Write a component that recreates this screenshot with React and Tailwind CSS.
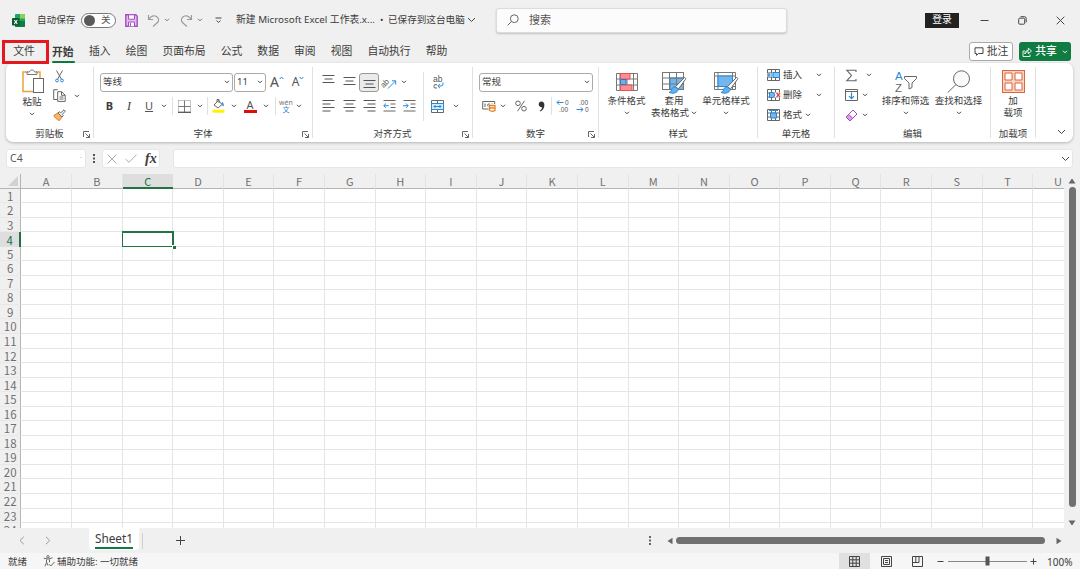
import clsx from "clsx";

const tabs = ["插入", "绘图", "页面布局", "公式", "数据", "审阅", "视图", "自动执行", "帮助"];
const columns = "ABCDEFGHIJKLMNOPQRSTU".split("");
const rows = Array.from({ length: 24 }, (_, i) => i + 1);

function Svg({ w, h, children, className, stroke = "#666", sw = 1 }) {
  return (
    <svg
      width={w}
      height={h}
      viewBox={`0 0 ${w} ${h}`}
      fill="none"
      stroke={stroke}
      strokeWidth={sw}
      className={clsx("shrink-0 overflow-visible font-['Liberation_Sans',sans-serif]", className)}
    >
      {children}
    </svg>
  );
}

function Slot({ className, children }) {
  return <div className={clsx("flex shrink-0 items-center justify-center", className)}>{children}</div>;
}

function Chevron({ className }) {
  return (
    <Svg w={6} h={4} className={className} stroke="#444">
      <path d="M1 .8 3 2.8 5 .8" />
    </Svg>
  );
}

function BigChevron({ className, color = "#444" }) {
  return (
    <Svg w={9} h={6} className={className} stroke={color}>
      <path d="M1 1 4.5 4.5 8 1" />
    </Svg>
  );
}

function Launcher() {
  return (
    <Svg w={7} h={7} stroke="#555" sw={0.9}>
      <path d="M.5 6V.5H6M2.5 2.5l4 4M6.5 3v3.5H3" />
    </Svg>
  );
}

function Divider({ className }) {
  return <div className={clsx("w-px shrink-0 bg-[#e1e1e1]", className)} />;
}

function Group({ label, launcher, className, children }) {
  return (
    <div className={clsx("flex h-[79px] shrink-0 flex-col pt-[1px]", className)}>
      <div className="flex h-[62px] shrink-0">{children}</div>
      <div className="flex h-[16px] shrink-0 items-center">
        <div className="w-[10px]" />
        <div className="flex-1 text-center">{label}</div>
        <div className="w-[10px] pt-[1px]">{launcher && <Launcher />}</div>
      </div>
    </div>
  );
}

function Lines({ widths, align = "center" }) {
  return (
    <Svg w={13} h={widths.length * 3.5 - 1.5} stroke="#555">
      {widths.map((w, i) => {
        const x = align === "left" ? 0.5 : align === "right" ? 12.5 - w : (13 - w) / 2;
        return <path key={i} d={`M${x} ${i * 3.5 + 0.5}h${w}`} />;
      })}
    </Svg>
  );
}

function Indent({ flip }) {
  return (
    <Svg w={13} h={12}>
      <path d="M.5 .5h12M7.5 4h5M7.5 7.500h5M.5 11h12" />
      <path stroke="#2b88d8" d={flip ? "M0 5.700h5M3 3.500l2.200 2.200L3 7.900" : "M.8 5.700h5M3 3.500.8 5.700 3 7.900"} />
    </Svg>
  );
}

function TitleBar() {
  return (
    <div className="flex h-[40px] shrink-0 items-center">
      <Slot className="ml-[11px] w-[14px]">
        <Svg w={13} h={13} stroke="none">
          <rect x="3" y="0" width="10" height="13" rx="1" fill="#21a366" />
          <path fill="#8fd14f" d="M8 0h4a1 1 0 0 1 1 1v3.500H8z" />
          <path fill="#107c41" d="M3 7h10v5a1 1 0 0 1-1 1H4a1 1 0 0 1-1-1z" />
          <rect x="0" y="4" width="7.500" height="7.500" rx=".7" fill="#0b5c2f" />
          <path stroke="#fff" strokeWidth="1.100" d="m2.300 6 3 3.800m0-3.800-3 3.800" />
        </Svg>
      </Slot>
      <span className="ml-[12px] w-[44px] whitespace-nowrap text-[9.6px]">自动保存</span>
      <div className="flex h-[15px] w-[35px] items-center rounded-full border border-[#777] bg-white pl-[2px]">
        <div className="h-[11px] w-[11px] rounded-full bg-[#5a5a5a]" />
        <span className="ml-[6px] text-[9.5px] text-[#555]">关</span>
      </div>
      <Slot className="ml-[7px] w-[16px]">
        <Svg w={13} h={13} stroke="#a34fc0" sw={1.4}>
          <path fill="#e3bdf0" d="M.8.8h10l1.400 1.400v10H.8z" />
          <path fill="#fff" strokeWidth="1" d="M3.500.8h6v4.400h-6zM3.500 12.200V8h6v4.200M5.500 9v3" />
        </Svg>
      </Slot>
      <Slot className="ml-[5px] w-[18px]">
        <Svg w={13} h={13} stroke="#999" sw={1.1}>
          <path d="M1.500 1v4.500h4.600M1.500 5.500C4 2 7 1 9.500 2.500s3 4.500.5 6.500L6 12.500" />
        </Svg>
      </Slot>
      <Chevron className="ml-[2px] opacity-70" />
      <Slot className="ml-[7px] w-[18px]">
        <Svg w={13} h={13} stroke="#999" sw={1.1}>
          <path d="M11.500 1v4.500H6.900M11.500 5.500C9 2 6 1 3.500 2.500s-3 4.500-.5 6.500L7 12.500" />
        </Svg>
      </Slot>
      <Chevron className="ml-[2px] opacity-70" />
      <Slot className="ml-[9px] w-[12px]">
        <Svg w={7} h={7} stroke="#444">
          <path d="M.5 1h6M1.500 3.500l2 2 2-2" />
        </Svg>
      </Slot>
      <span className="ml-[12px] w-[144px] whitespace-nowrap text-[9.8px]">新建 Microsoft Excel 工作表.x...</span>
      <span className="w-[8px] text-[9px]">•</span>
      <span className="w-[79px] whitespace-nowrap text-[9.6px]">已保存到这台电脑</span>
      <BigChevron />
      <div className="ml-[20px] flex h-[25px] w-[291px] items-center rounded-[3px] border border-[#dcdcdc] bg-[#fcfcfc] pl-[10px] shadow-[0_1px_2px_rgba(0,0,0,0.2)]">
        <Svg w={12} h={12} stroke="#666">
          <circle cx="7.300" cy="4.700" r="3.900" />
          <path d="M4.500 7.500.7 11.300" />
        </Svg>
        <span className="ml-[10px] text-[11px] text-[#555]">搜索</span>
      </div>
      <div className="ml-[138px] flex h-[15px] w-[34px] items-center justify-center bg-[#222] text-[9.8px] text-white">登录</div>
      <Slot className="ml-[15px] w-[20px]">
        <Svg w={9} h={9} stroke="#444"><path d="M.5 4.500h8" /></Svg>
      </Slot>
      <Slot className="ml-[18px] w-[20px]">
        <Svg w={9} h={9} stroke="#444">
          <rect x=".7" y="2.200" width="6" height="6" rx="1" />
          <path d="M2.500.7h4a1.700 1.700 0 0 1 1.700 1.700v4" />
        </Svg>
      </Slot>
      <Slot className="ml-[18px] w-[20px]">
        <Svg w={9} h={9} stroke="#444"><path d="m.7.7 7.600 7.600m0-7.600L.7 8.300" /></Svg>
      </Slot>
    </div>
  );
}

function TabBar() {
  return (
    <div className="flex h-[23px] shrink-0 items-center text-[10.8px]">
      <div className="relative flex h-[22px] w-[48px] items-center justify-center">
        文件
        <div className="absolute -top-[1px] left-[2px] h-[24px] w-[47px] border-[3px] border-[#e3191f]" />
      </div>
      <div className="ml-[4px] flex h-[22px] w-[23px] flex-col justify-between whitespace-nowrap pt-[3px] font-bold">
        <span className="leading-[16px]">开始</span>
        <div className="h-[2px] w-full rounded bg-[#107c41]" />
      </div>
      <div className="ml-[14px] flex gap-[15.1px]">
        {tabs.map((tab) => (
          <span key={tab}>{tab}</span>
        ))}
      </div>
      <div className="ml-auto flex h-[19px] w-[44px] items-center justify-center gap-[3px] rounded-[3px] border border-[#aaa] bg-white">
        <Svg w={10} h={9} stroke="#444">
          <path d="M1 .8h8v5.700H4.500L2.500 8.300V6.500H1z" />
        </Svg>
        批注
      </div>
      <div className="ml-[6px] mr-[9px] flex h-[19px] w-[52px] items-center justify-center gap-[3px] rounded-[3px] bg-[#107c41] font-medium text-white">
        <Svg w={10} h={10} stroke="#fff" sw={0.9}>
          <path d="M3 4H1v5.500h7V7.500M2.800 7C3 4.500 4.500 3.400 6.300 3.400V1.200L9.500 4 6.300 6.700V4.800C4.800 4.800 3.600 5.400 2.800 7z" />
        </Svg>
        共享
        <Svg w={6} h={4} stroke="#fff" className="ml-[2px]"><path d="M1 .8 3 2.800 5 .8" /></Svg>
      </div>
    </div>
  );
}

function ClipboardGroup() {
  return (
    <Group label="剪贴板" launcher className="w-[87px]">
      <div className="ml-[10px] flex w-[34px] flex-col items-center pt-[5px]">
        <Svg w={22} h={26}>
          <path stroke="#eba13e" strokeWidth="1.500" d="M6 3H1v19.500h10M14 3h4v6" />
          <path fill="#fff" stroke="#777" d="M5 5.500V3h2.500C8 .2 12 .2 12.500 3H15v2.500z" />
          <rect x="11.500" y="9.500" width="10" height="14" fill="#fff" stroke="#666" />
        </Svg>
        <span className="mr-[2px] mt-[1px] leading-[12px]">粘贴</span>
        <Chevron className="mr-[2px] mt-[4px]" />
      </div>
      <div className="ml-[1px] flex w-[16px] flex-col items-center pt-[4px]">
        <Slot className="h-[16px]">
          <Svg w={9} h={13}>
            <path d="M1.500.5 6.300 9M7.500.5 2.700 9" />
            <g stroke="#2b88d8"><circle cx="2" cy="10.500" r="1.400" /><circle cx="7" cy="10.500" r="1.400" /></g>
          </Svg>
        </Slot>
        <Slot className="mt-[2px] h-[18px]">
          <Svg w={13} h={13}>
            <path d="M4.500 10.500H.7V.7h4M4.700 2.700h4l3.500 3.500v6.200H4.700zM8.500 2.900v3.400H12M6.500 8h4M6.500 10h4" />
          </Svg>
        </Slot>
        <Slot className="mt-[2px] h-[18px]">
          <Svg w={13} h={12}>
            <path fill="#f6b56c" stroke="#e08428" d="M.8 6.500 5 4l4 4-2.500 3.500C4 11 2 9 .8 6.500z" />
            <path fill="#fff" d="m5 3.800 1.500-1 1.300 1L11 .8l1.300 1.300-3 3.200 1 1.300-1.200 1.400z" />
          </Svg>
        </Slot>
      </div>
      <Chevron className="ml-[7px] mt-[30px]" />
    </Group>
  );
}

function FontGroup() {
  return (
    <Group label="字体" launcher className="w-[218px]">
      <div className="ml-[6px] flex flex-col pt-[8px]">
        <div className="flex h-[20px] items-center">
          <div className="flex h-[19px] w-[133px] items-center justify-between rounded-[3px] border border-[#aaa] px-[2px]">
            <span>等线</span><Chevron />
          </div>
          <div className="ml-[1px] flex h-[19px] w-[32px] items-center justify-between rounded-[3px] border border-[#aaa] px-[2px]">
            <span>11</span><Chevron />
          </div>
          <Slot className="ml-[4px] w-[14px]">
            <span className="text-[14px] leading-none text-[#555]">A</span>
            <Svg w={5} h={4} stroke="#2b88d8" className="mb-[8px]"><path d="M.7 3 2.500 1 4.300 3" /></Svg>
          </Slot>
          <Slot className="ml-[7px] w-[14px]">
            <span className="text-[12px] leading-none text-[#555]">A</span>
            <Svg w={5} h={4} stroke="#2b88d8" className="mb-[8px]"><path d="M.7 1 2.500 3 4.300 1" /></Svg>
          </Slot>
        </div>
        <div className="mt-[4px] flex h-[20px] items-center text-[11px]">
          <Slot className="w-[19px] font-bold">B</Slot>
          <Slot className="w-[20px] font-['Liberation_Serif',serif] text-[12px] italic">I</Slot>
          <Slot className="w-[20px] text-[#555] underline">U</Slot>
          <Slot className="w-[10px]"><Chevron /></Slot>
          <Divider className="ml-[3px] h-[18px]" />
          <Slot className="w-[22px]">
            <Svg w={13} h={13}>
              <path stroke="#888" strokeDasharray="1 1" d="M.5.5h12v12M.5.500v12" />
              <path stroke="#777" d="M6.500.5v12M.5 6.500h12" />
              <path stroke="#555" strokeWidth="1.300" d="M0 12.300h13" />
            </Svg>
          </Slot>
          <Slot className="w-[10px]"><Chevron /></Slot>
          <Divider className="ml-[2px] h-[18px]" />
          <Slot className="w-[21px]">
            <Svg w={13} h={14}>
              <path d="m2 6 4.500-4.500L10 5.500 6 9zM5 3V.5h2V4" />
              <path stroke="#2b88d8" strokeWidth="1.500" d="M10 3.500c1 1 1.300 2 1 3.500" />
              <path stroke="#fff200" strokeWidth="3" d="M.5 12.200h12" />
            </Svg>
          </Slot>
          <Slot className="w-[9px]"><Chevron /></Slot>
          <Slot className="w-[24px]">
            <div className="flex flex-col items-center">
              <span className="text-[11px] leading-[11px] text-[#555]">A</span>
              <div className="h-[3px] w-[13px] bg-[#e00b0b]" />
            </div>
          </Slot>
          <Slot className="w-[8px]"><Chevron /></Slot>
          <Divider className="ml-[5px] h-[18px]" />
          <Slot className="w-[20px] flex-col">
            <span className="text-[7px] leading-[6px] text-[#777]">wén</span>
            <span className="text-[7px] leading-[7px] text-[#2b88d8]">文</span>
          </Slot>
          <Slot className="w-[6px]"><Chevron /></Slot>
        </div>
      </div>
    </Group>
  );
}

function AlignGroup() {
  return (
    <Group label="对齐方式" launcher className="w-[159px]">
      <div className="ml-[5px] flex flex-col pt-[8px]">
        <div className="flex h-[20px] items-center">
          <Slot className="w-[21px] pb-[6px]"><Lines widths={[12, 8, 12]} /></Slot>
          <Slot className="w-[20px] pb-[2px]"><Lines widths={[12, 8, 12]} /></Slot>
          <Slot className="h-[19px] w-[20px] rounded-[3px] border border-[#999] bg-[#ebebeb] pt-[4px]">
            <Lines widths={[12, 8, 12]} />
          </Slot>
          <Slot className="w-[21px]">
            <Svg w={14} h={13}>
              <text x="-3" y="8" fontSize="8" stroke="none" fill="#555" transform="rotate(-45 4 6)">ab</text>
              <path stroke="#2b88d8" d="M5 12.500 12.500 5M9 4.800h3.700v3.700" />
            </Svg>
          </Slot>
          <Slot className="w-[8px]"><Chevron /></Slot>
        </div>
        <div className="mt-[4px] flex h-[20px] items-center">
          <Slot className="w-[21px]"><Lines widths={[12, 8, 12, 8]} align="left" /></Slot>
          <Slot className="w-[20px]"><Lines widths={[12, 8, 12, 8]} /></Slot>
          <Slot className="w-[20px]"><Lines widths={[12, 8, 12, 8]} align="right" /></Slot>
          <Slot className="w-[20px]"><Indent /></Slot>
          <Slot className="w-[20px]"><Indent flip /></Slot>
        </div>
      </div>
      <Divider className="ml-[4px] mt-[8px] h-[49px]" />
      <div className="ml-[4px] flex flex-col pt-[8px]">
        <Slot className="h-[20px] w-[20px]">
          <Svg w={12} h={13}>
            <text x="1" y="6" fontSize="8.500" stroke="none" fill="#555">ab</text>
            <path d="M5 8.700Q1.800 7.800 1.800 10.300T5 12" />
            <path stroke="#2b88d8" d="M11 6.500v1.500q0 2-2 2H6M8 7.800 5.800 10 8 12.200" />
          </Svg>
        </Slot>
        <div className="mt-[4px] flex h-[20px] items-center">
          <Slot className="w-[19px]">
            <Svg w={13} h={13}>
              <path d="M.5.5h12v12H.5zM6.500.5v2.500M6.500 10v2.500" />
              <path fill="#d6eafa" stroke="#2b88d8" d="M.5 3.500h12v6H.500zM3 6.500h7M4.500 5 3 6.500 4.500 8M8.500 5 10 6.500 8.500 8" />
            </Svg>
          </Slot>
          <Chevron className="ml-[6px]" />
        </div>
      </div>
    </Group>
  );
}

function NumberGroup() {
  return (
    <Group label="数字" launcher className="w-[125px]">
      <div className="ml-[6px] flex flex-col pt-[8px]">
        <div className="flex h-[20px] items-center">
          <div className="flex h-[19px] w-[114px] items-center justify-between rounded-[3px] border border-[#aaa] px-[2px]">
            <span>常规</span><Chevron />
          </div>
        </div>
        <div className="mt-[4px] flex h-[20px] items-center">
          <Slot className="w-[19px]">
            <Svg w={14} h={12}>
              <path d="M6.500 9H.7V1.500h12V4M3 3.500v3.500M10 3.500V3M7.800 4H6.200q-1.200 1.200 0 2.500" />
              <path fill="#fff" stroke="#e08428" strokeWidth="1.300" d="M7.500 5.500h5.500v5q-2.700 1.500-5.500 0zM7.500 8h5.500" />
            </Svg>
          </Slot>
          <Slot className="w-[10px]"><Chevron /></Slot>
          <Slot className="w-[25px]">
            <Svg w={12} h={12}>
              <circle cx="3" cy="3.300" r="2.300" /><circle cx="9" cy="8.700" r="2.300" /><path d="M9.500.800 2.500 11.200" />
            </Svg>
          </Slot>
          <Slot className="w-[16px]">
            <Svg w={7} h={11} stroke="none">
              <path fill="#333" d="M3.300.5C5.200.5 6.400 1.800 6.400 4c0 3-1.600 5.300-4.200 6.500l-.5-.8C3.200 8.800 4 7.500 4.100 6.200 2.400 6.500.700 5.200.700 3.300.7 1.700 1.800.5 3.300.5z" />
            </Svg>
          </Slot>
          <Divider className="ml-[2px] h-[18px]" />
          <Slot className="w-[20px]">
            <Svg w={13} h={14}>
              <g stroke="none" fill="#555" fontSize="6.500"><text x="9" y="6">0</text><text x="3" y="13">.00</text></g>
              <path stroke="#2b88d8" d="M1 3.500h6.500M3.300 1.200 1 3.500l2.300 2.300" />
            </Svg>
          </Slot>
          <Slot className="w-[20px]">
            <Svg w={13} h={14}>
              <g stroke="none" fill="#555" fontSize="6.500"><text x="3" y="6">.00</text><text x="9" y="13">0</text></g>
              <path stroke="#2b88d8" d="M.5 10.500H7M4.700 8.200 7 10.500l-2.300 2.300" />
            </Svg>
          </Slot>
        </div>
      </div>
    </Group>
  );
}

function BigButton({ icon, label, label2, className, split }) {
  return (
    <div className={clsx("flex shrink-0 flex-col items-center whitespace-nowrap pt-[5px]", className)}>
      <Slot className="h-[25px]">{icon}</Slot>
      <span className="mt-[1px] leading-[12px]">{label}</span>
      {label2 ? (
        <div className="flex items-center gap-[2px] leading-[12px]">
          {label2}
          {split && <Chevron />}
        </div>
      ) : (
        <Chevron className="mt-[4px]" />
      )}
    </div>
  );
}

function Brush() {
  return (
    <g>
      <path fill="#fff" stroke="#666" d="M22.500 6.500c1 0 1.500 1 1 1.800L16.500 18l-3-2.300z" />
      <path fill="#64b1e8" stroke="#2b88d8" d="M13.200 15.800c-2.500 0-3.200 1.500-3.700 3.200-.4 1.200-1 2-2.500 2.300 3 1.600 8.500 1.300 9.300-3z" />
    </g>
  );
}

function StyleGroup() {
  return (
    <Group label="样式" className="w-[158px]">
      <BigButton
        className="ml-[6px] w-[43px]"
        label="条件格式"
        icon={
          <Svg w={24} h={20} stroke="#777">
            <path fill="#fff" d="M1.500 1.500h21v17h-21zM1.500 7h21M1.500 13h21M5 1.500v17M12 1.500v17M18.500 1.500v17" />
            <path fill="#ff8c93" stroke="#e5525c" d="M5.500 1.500h9.500V7H5.500zM5.500 13h11.500v5.500H5.500z" />
            <path fill="#72aee6" stroke="#2b78c8" d="M5.500 7.500h5.500v5H5.500z" />
          </Svg>
        }
      />
      <BigButton
        className="ml-[2px] w-[48px]"
        label="套用"
        label2="表格格式"
        split
        icon={
          <Svg w={24} h={22} stroke="#777">
            <path fill="#fff" d="M.5 1.500h21v17H.5z" />
            <path fill="#72b6ec" stroke="#2b88d8" d="M8 7h13.500v11.500H8z" />
            <path d="M.5 7h21M.5 13h21M7.500 1.500v17M14.500 1.500v17M.5 1.500h21v17H.5z" />
            <Brush />
          </Svg>
        }
      />
      <BigButton
        className="ml-[2px] w-[52px]"
        label="单元格样式"
        icon={
          <Svg w={24} h={22} stroke="#777">
            <path fill="#fff" d="M.5 1.500h21v17H.5zM4 1.500v17M.5 5h21M18.500 1.500v17M.5 15.500h21" />
            <path fill="#72b6ec" stroke="#2b88d8" d="M4 5h14.500v10.500H4z" />
            <Brush />
          </Svg>
        }
      />
    </Group>
  );
}

function CellIcon({ kind }) {
  return (
    <Svg w={13} h={12}>
      <path d="M.5.500h12v11H.500zM.5 4h12M.5 8h12M4.500.500v11M8.500.500v11" />
      {kind === "insert" && (
        <>
          <path stroke="#fff" strokeWidth="3" d="M0 6h6" />
          <path fill="#8cc5f2" stroke="#2b88d8" d="M6 3.500h6.500v5H6zM.5 6h5M3 3.500.500 6 3 8.500" />
        </>
      )}
      {kind === "delete" && (
        <>
          <path stroke="#fff" strokeWidth="5" d="M8 6h5.500" />
          <path fill="#72b6ec" stroke="#2b88d8" d="M2.500 3.500h3.500L8 6 6 8.500H2.500z" />
          <path stroke="#e04040" strokeWidth="1.200" d="m9.500 4 3.500 4m0-4L9.500 8" />
        </>
      )}
      {kind === "format" && <path fill="#72b6ec" stroke="#2b88d8" d="M3.500 4h6v5h-6zM2 1.500h9" />}
    </Svg>
  );
}

function CellsGroup() {
  const items = [
    { kind: "insert", label: "插入" },
    { kind: "delete", label: "删除" },
    { kind: "format", label: "格式" },
  ];
  return (
    <Group label="单元格" className="w-[76px]">
      <div className="flex flex-col pt-[1px]">
        {items.map((item) => (
          <div key={item.kind} className="flex h-[20px] items-center">
            <Slot className="ml-[9px] w-[13px]"><CellIcon kind={item.kind} /></Slot>
            <span className="ml-[3px] w-[19px] whitespace-nowrap">{item.label}</span>
            <Chevron className={item.kind === "format" ? "ml-[3px]" : "ml-[14px]"} />
          </div>
        ))}
      </div>
    </Group>
  );
}

function EditGroup() {
  return (
    <Group label="编辑" className="w-[155px]">
      <div className="ml-[10px] flex w-[28px] flex-col pt-[1px]">
        <div className="flex h-[20px] items-center">
          <Svg w={13} h={13} sw={1.1}><path d="M11 3V1.200H1.800L6.500 6.500l-4.700 5.300H11V10" /></Svg>
          <Chevron className="ml-[8px]" />
        </div>
        <div className="flex h-[20px] items-center">
          <Svg w={13} h={12}>
            <path d="M.500.500h12v11H.500zM.5 2.500h12" />
            <path stroke="#2b88d8" strokeWidth="1.200" d="M6.500 3.500v6M4 7.200l2.500 2.500L9 7.200" />
          </Svg>
          <Chevron className="ml-[4px]" />
        </div>
        <div className="flex h-[20px] items-center">
          <Svg w={13} h={13} stroke="#a34fc0">
            <path fill="#fff" d="m1 8 7-7 4 4-7 7z" />
            <path fill="#d79be8" d="m1 8 2.700-2.700 4 4L5 12z" />
          </Svg>
          <Chevron className="ml-[4px]" />
        </div>
      </div>
      <BigButton
        className="ml-[7px] w-[51px]"
        label="排序和筛选"
        icon={
          <Svg w={24} h={24}>
            <text x="1" y="10" fontSize="11.500" stroke="none" fill="#2b88d8">A</text>
            <text x="1" y="22" fontSize="11.500" stroke="none" fill="#666">Z</text>
            <path d="M10.500 6.500h12v2l-4.500 4.500v4.500l-3 1.500v-6L10.500 8.500z" />
          </Svg>
        }
      />
      <BigButton
        className="ml-[2px] w-[51px]"
        label="查找和选择"
        icon={
          <Svg w={24} h={24}>
            <circle cx="14.500" cy="8.800" r="8" fill="#fafafa" /><path d="M9 14.500.800 22.500" />
          </Svg>
        }
      />
    </Group>
  );
}

function Ribbon() {
  return (
    <div className="ml-[6px] flex h-[79px] w-[1067px] shrink-0 rounded-[7px] bg-white text-[9.5px] shadow-[0_1px_3px_rgba(0,0,0,0.25)]">
      <ClipboardGroup />
      <Divider className="mt-[4px] h-[71px]" />
      <FontGroup />
      <Divider className="mt-[4px] h-[71px]" />
      <AlignGroup />
      <Divider className="mt-[4px] h-[71px]" />
      <NumberGroup />
      <Divider className="mt-[4px] h-[71px]" />
      <StyleGroup />
      <Divider className="mt-[4px] h-[71px]" />
      <CellsGroup />
      <Divider className="mt-[4px] h-[71px]" />
      <EditGroup />
      <Divider className="mt-[4px] h-[71px]" />
      <Group label="加载项" className="w-[44px] whitespace-nowrap">
        <BigButton
          className="w-full"
          label="加"
          label2="载项"
          icon={
            <Svg w={23} h={23} stroke="#d9663c">
              <rect x=".5" y=".5" width="22" height="22" fill="#fbd3c3" />
              <path fill="#fff" d="M3 3h7v7H3zM13 3h7v7h-7zM3 13h7v7H3zM13 13h7v7h-7z" />
            </Svg>
          }
        />
      </Group>
      <Divider className="mt-[4px] h-[71px]" />
      <BigChevron className="ml-[21px] mt-[66px]" />
    </div>
  );
}

function FormulaBar() {
  return (
    <div className="flex h-[32px] shrink-0 items-start pl-[6px] pt-[7px]">
      <div className="flex h-[19px] w-[80px] items-center justify-between rounded-[3px] border border-[#e6e6e6] bg-white px-[3px] text-[10.5px] text-[#555]">
        C4
        <span className="text-[7px] text-[#aaa]">·</span>
      </div>
      <Slot className="h-[19px] w-[16px]">
        <Svg w={2} h={9} stroke="#444" sw={1.8}><path d="M1 0v2M1 3.500v2M1 7v2" /></Svg>
      </Slot>
      <div className="flex h-[19px] w-[58px] items-center rounded-[3px] border border-[#e6e6e6] bg-white pl-[4px]">
        <Svg w={10} h={10} stroke="#aaa"><path d="m.5.5 9 9m0-9-9 9" /></Svg>
        <Svg w={12} h={9} stroke="#aaa" className="ml-[8px]"><path d="M.5 5 4 8.300 11.500.700" /></Svg>
        <span className="ml-[8px] font-['Liberation_Serif',serif] text-[14px] font-bold italic leading-none">fx</span>
      </div>
      <div className="ml-[13px] flex h-[19px] w-[900px] items-center justify-end rounded-[3px] border border-[#e6e6e6] bg-white pr-[2px]">
        <BigChevron />
      </div>
    </div>
  );
}

function Sheet() {
  return (
    <div className="flex h-[354px] shrink-0 font-['Noto_Sans_CJK_SC',sans-serif] text-[#707070]">
      <div className="w-[1064px] overflow-hidden">
        <div className="flex h-[14.5px]">
          <div className="flex w-[21.4px] shrink-0 items-end justify-end border-b border-r border-[#b5b5b5] pb-[2px] pr-[2px]">
            <Svg w={10} h={10} stroke="none"><path fill="#d2d2d2" d="M10 0v10H0z" /></Svg>
          </div>
          {columns.map((col) => (
            <div
              key={col}
              className={clsx(
                "flex w-[50.6px] shrink-0 items-center justify-center text-[11px] leading-none",
                col === "C"
                  ? "border-b-2 border-[#217346] bg-[#dedede] pt-[2px] text-[#217346]"
                  : "border-b border-r border-b-[#b5b5b5] border-r-[#e4e4e4] pt-[1px]"
              )}
            >
              {col}
            </div>
          ))}
        </div>
        {rows.map((row) => (
          <div key={row} className="flex h-[14.55px]">
            <div
              className={clsx(
                "flex w-[21.4px] shrink-0 items-center justify-center pt-[2px] text-[11.5px] leading-none",
                row === 4
                  ? "border-r-2 border-[#217346] bg-[#dedede] text-[#217346]"
                  : "border-b border-r border-b-[#e8e8e8] border-r-[#b5b5b5]"
              )}
            >
              {row}
            </div>
            {columns.map((col) => (
              <div key={col} className="relative w-[50.6px] shrink-0 border-b border-r border-[#e5e5e5] bg-white">
                {row === 4 && col === "C" && (
                  <div className="absolute -left-[1px] -top-[1px] z-10 h-[16px] w-[52px] bg-[#217346] p-[1.4px]">
                    <div className="h-full w-full bg-white" />
                    <div className="absolute -bottom-[2px] -right-[2px] h-[4px] w-[4px] border-l border-t border-white bg-[#217346]" />
                  </div>
                )}
              </div>
            ))}
          </div>
        ))}
      </div>
      <div className="flex w-[16px] flex-col items-center pt-[4px]">
        <Svg w={8} h={6} stroke="none"><path fill="#666" d="M4 .500 7.500 5.500h-7z" /></Svg>
        <div className="mt-[3px] h-[320px] w-[7px] shrink-0 rounded-full bg-[#707070]" />
        <Svg w={8} h={6} stroke="none" className="mt-[13px]"><path fill="#666" d="M4 5.500 7.500.500h-7z" /></Svg>
      </div>
    </div>
  );
}

function SheetTabs() {
  return (
    <div className="flex h-[25px] shrink-0 items-center">
      <Svg w={6} h={9} stroke="#999" className="ml-[19px]"><path d="M4.800.800 1 4.500l3.800 3.700" /></Svg>
      <Svg w={6} h={9} stroke="#999" className="ml-[20px]"><path d="M1 .800 4.800 4.500 1 8.200" /></Svg>
      <div className="ml-[38px] flex h-[22px] w-[50px] flex-col items-center self-start rounded-b-[4px] bg-white">
        <span className="mt-[2px] text-[11.8px] leading-[16px]">Sheet1</span>
        <div className="mt-[1px] h-[1.5px] w-[38px] bg-[#107c41]" />
      </div>
      <div className="ml-[3px] h-[16px] w-px bg-[#d0d0d0]" />
      <Svg w={9} h={9} stroke="#444" className="ml-[33px]"><path d="M4.500 0v9M0 4.500h9" /></Svg>
      <Svg w={2} h={9} stroke="#444" sw={1.6} className="ml-[464px]"><path d="M1 0v2M1 3.500v2M1 7v2" /></Svg>
      <Svg w={6} h={8} stroke="none" className="ml-[16px]"><path fill="#666" d="M.500 4 5.500.800v6.400z" /></Svg>
      <div className="ml-[3px] h-[7px] w-[369px] rounded-full bg-[#707070]" />
      <Svg w={6} h={8} stroke="none" className="ml-[11px]"><path fill="#666" d="M5.500 4 .500.800v6.400z" /></Svg>
    </div>
  );
}

function StatusBar() {
  return (
    <div className="flex h-[16px] shrink-0 items-center bg-[#f6f6f6] text-[9.5px]">
      <span className="ml-[8px] w-[35px] pt-[2px]">就绪</span>
      <Svg w={12} h={12}>
        <circle cx="5" cy="1.800" r="1.200" />
        <path d="M.8 3.200Q5 5.200 9.500 2.800M3.500 4.500v3L2 11.300M6.500 4.500v2.700M3.800 7.500l1.200 3M6 9.200l1.800 1.800 3.700-4" />
      </Svg>
      <span className="ml-[2px] whitespace-nowrap pt-[2px]">辅助功能: 一切就绪</span>
      <div className="ml-auto flex h-full w-[31px] items-center justify-center bg-[#e0e0e0]">
        <Svg w={11} h={11} stroke="#444"><path d="M.500.500h10v10H.500zM.5 3.800h10M.5 7.200h10M3.800.500v10M7.200.500v10" /></Svg>
      </div>
      <Svg w={11} h={11} stroke="#444" className="ml-[11px]">
        <path d="M.500.500h10v10H.500zM2.500 2.500h6v6h-6zM4 4.500h3M4 6.500h3" />
      </Svg>
      <Svg w={11} h={11} stroke="#444" className="ml-[20px]">
        <path d="M.500.500h10v10H.500zM.5 6.500h6.500V.500M3.800.500v6" />
      </Svg>
      <Svg w={7} h={7} stroke="#444" className="ml-[14px]"><path d="M.500 3.500h6" /></Svg>
      <Svg w={79} h={10} stroke="#888" className="ml-[4px]">
        <path d="M0 5.500h79" /><path stroke="#555" strokeWidth="4" d="M39.500 .500v9" />
      </Svg>
      <Svg w={7} h={7} stroke="#444" className="ml-[3px]"><path d="M.500 3.500h6M3.500.500v6" /></Svg>
      <span className="ml-[10px] w-[33px] pt-[2px] text-[10px]">100%</span>
    </div>
  );
}

export default function App() {
  return (
    <div className="flex h-[569px] w-[1080px] flex-col overflow-hidden bg-[#f0f0f0] font-['Noto_Sans','Noto_Sans_CJK_SC',sans-serif] text-[#3c3c3c]">
      <TitleBar />
      <TabBar />
      <Ribbon />
      <FormulaBar />
      <Sheet />
      <SheetTabs />
      <StatusBar />
    </div>
  );
}
